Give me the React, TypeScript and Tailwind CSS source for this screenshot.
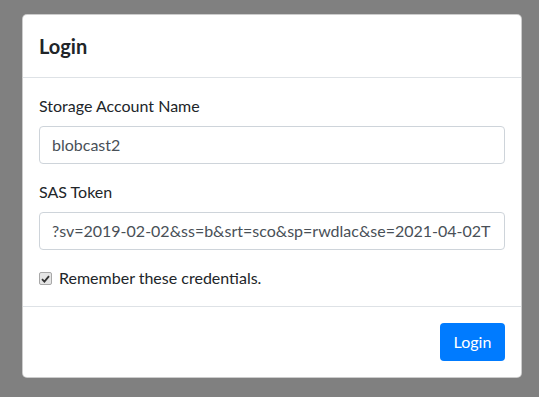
import React from "react";

export default function App() {
  return (
    <div className="w-full h-[397px] bg-[#808080] pt-[14px] pl-[22px] font-['Lato',sans-serif] text-[#212529]">
      <div className="w-[500px] bg-white border border-black/20 rounded-[5px] flex flex-col">
        <div className="px-4 py-4 border-b border-[#dee2e6]">
          <h5 className="text-[20px] font-bold leading-[30px]">Login</h5>
        </div>
        <div className="p-4 flex flex-col">
          <div className="mb-4 flex flex-col">
            <label className="text-base leading-6 mb-2">Storage Account Name</label>
            <div className="h-[38px] px-3 border border-[#ced4da] rounded-[4px] text-[#495057] flex items-center text-base">
              blobcast2
            </div>
          </div>
          <div className="mb-4 flex flex-col">
            <label className="text-base leading-6 mb-2">SAS Token</label>
            <div className="h-[38px] px-3 border border-[#ced4da] rounded-[4px] text-[#495057] flex items-center text-base overflow-hidden whitespace-nowrap">
              ?sv=2019-02-02&amp;ss=b&amp;srt=sco&amp;sp=rwdlac&amp;se=2021-04-02T
            </div>
          </div>
          <div className="flex items-center h-6 text-base leading-6">
            <span className="w-[13px] h-[13px] border border-[#a8a8a8] bg-[#e5e5e5] rounded-[2px] flex items-center justify-center mr-[7px] mt-[1px]">
              <svg width="9" height="8" viewBox="0 0 9 8">
                <path d="M1 4.2 L3.4 6.6 L8 1.2" stroke="#333" strokeWidth="1.8" fill="none" />
              </svg>
            </span>
            <span>Remember these credentials.</span>
          </div>
        </div>
        <div className="border-t border-[#dee2e6] p-3 flex justify-end">
          <button className="m-1 h-[38px] w-[65px] flex items-center justify-center bg-[#007bff] text-white rounded-[4px] text-base leading-6">
            Login
          </button>
        </div>
      </div>
    </div>
  );
}
